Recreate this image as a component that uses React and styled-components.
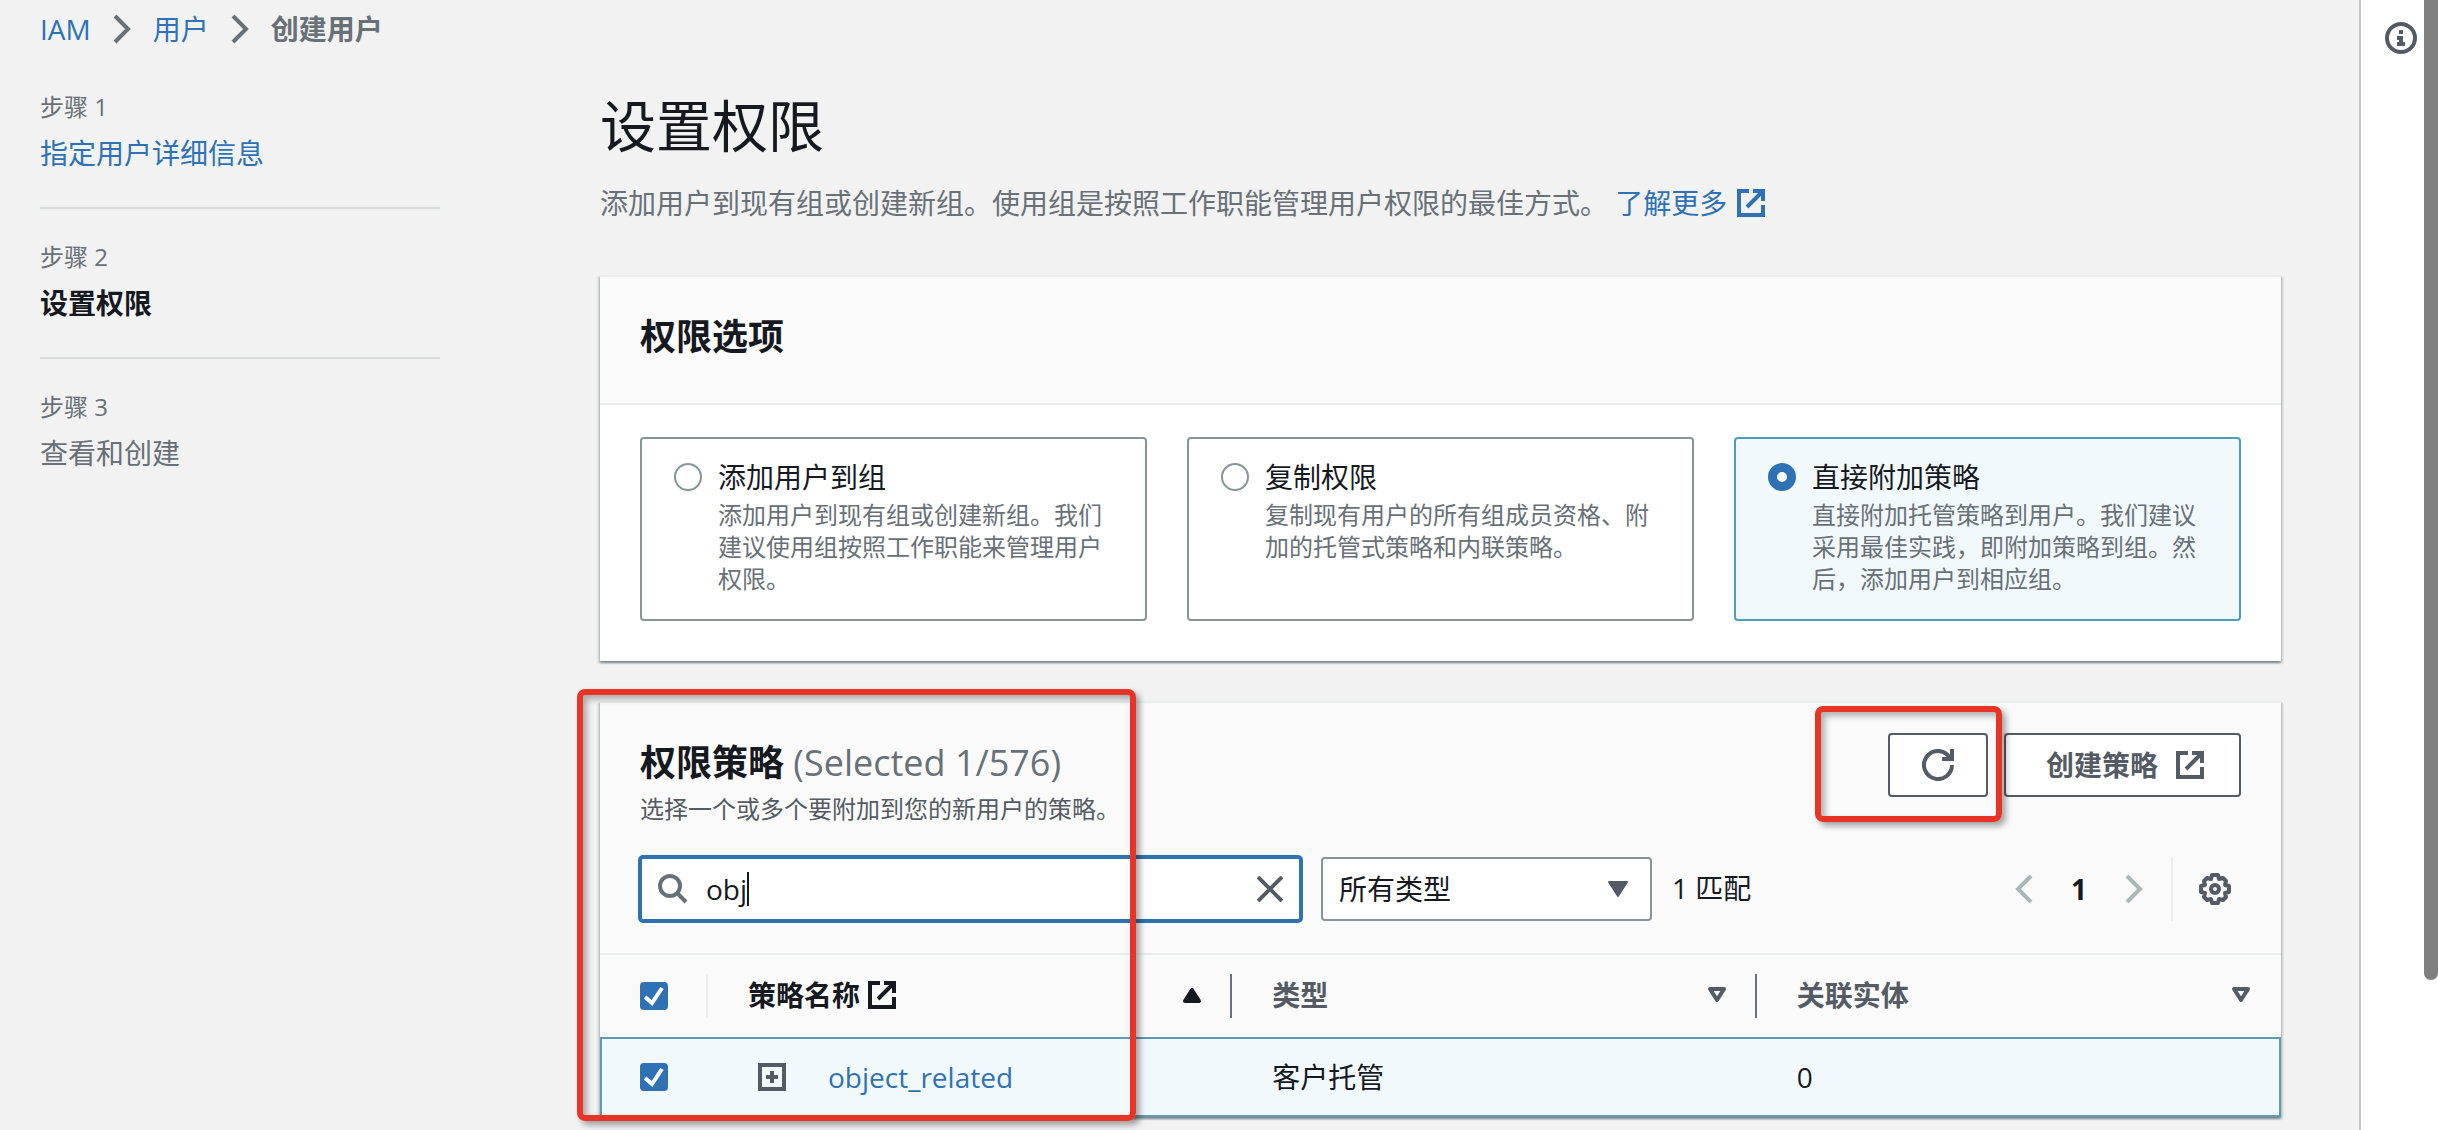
import React, { useState } from 'react'
import styled, { createGlobalStyle } from 'styled-components';

const GlobalStyle = createGlobalStyle`
* { box-sizing: border-box; }
body {
    margin: 0;
    background: #f2f2f2;
    color: #16191f;
    font-family: "Open Sans", "Noto Sans CJK SC", sans-serif;
    font-size: 28px;
    line-height: 44px;
}
a { color: #2e72b5; text-decoration: none; }
button, input, select { font: inherit; color: inherit; }
`;

const options = [
    { id: 'group', title: '添加用户到组', text: '添加用户到现有组或创建新组。我们建议使用组按照工作职能来管理用户权限。' },
    { id: 'copy', title: '复制权限', text: '复制现有用户的所有组成员资格、附加的托管式策略和内联策略。' },
    { id: 'attach', title: '直接附加策略', text: '直接附加托管策略到用户。我们建议采用最佳实践，即附加策略到组。然后，添加用户到相应组。' },
];

const ExternalIcon = () => (
    <Icon $size={28} viewBox="0 0 28 28" strokeWidth="4">
        <path d="M12 2H2v24h24V16M10 18L25 3M16 2h10v10" />
    </Icon>
)

const Chevron = ({ left }) => (
    <Icon $w={18} $size={30} viewBox="0 0 18 30" strokeWidth="4">
        <path d={left ? "M16 2L3 15l13 13" : "M2 2l13 13L2 28"} />
    </Icon>
)

const SortIcon = ({ up }) => (
    <Icon $w={20} $size={16} viewBox="0 0 20 16" strokeWidth="4" strokeLinejoin="round">
        {up ? <path d="M10 3l7 11H3z" fill="currentColor" /> : <path d="M3 2h14l-7 11z" />}
    </Icon>
)

const App = () => {
    const [selected, setSelected] = useState('attach');
    const [query, setQuery] = useState('obj');
    const [checked, setChecked] = useState(true);

    return <Page>
        <GlobalStyle />
        <Content>
            <Breadcrumbs aria-label="Breadcrumbs">
                <a href="#iam">IAM</a>
                <Chevron />
                <a href="#users">用户</a>
                <Chevron />
                <strong>创建用户</strong>
            </Breadcrumbs>
            <Columns>
                <Steps>
                    <Step>
                        <StepLabel>步骤 1</StepLabel>
                        <a href="#details">指定用户详细信息</a>
                    </Step>
                    <Step>
                        <StepLabel>步骤 2</StepLabel>
                        <StepName $active>设置权限</StepName>
                    </Step>
                    <Step>
                        <StepLabel>步骤 3</StepLabel>
                        <StepName>查看和创建</StepName>
                    </Step>
                </Steps>
                <main>
                    <Title>设置权限</Title>
                    <Intro>
                        添加用户到现有组或创建新组。使用组是按照工作职能管理用户权限的最佳方式。{' '}
                        <IconLink href="#more">了解更多<ExternalIcon /></IconLink>
                    </Intro>

                    <Panel>
                        <PanelHeader><PanelTitle>权限选项</PanelTitle></PanelHeader>
                        <Tiles>
                            {options.map(o => (
                                <Tile key={o.id} $active={selected === o.id}>
                                    <Radio type="radio" name="option" checked={selected === o.id} onChange={() => setSelected(o.id)} />
                                    <span>
                                        {o.title}
                                        <TileText>{o.text}</TileText>
                                    </span>
                                </Tile>
                            ))}
                        </Tiles>
                    </Panel>

                    <Panel>
                        <Annotation $area="table" />
                        <TableTop>
                            <div>
                                <PanelTitle>权限策略 <Count>(Selected 1/576)</Count></PanelTitle>
                                <SubTitle>选择一个或多个要附加到您的新用户的策略。</SubTitle>
                            </div>
                            <Actions>
                                <Annotation $area="refresh" />
                                <Button $square aria-label="刷新">
                                    <Icon $size={32} viewBox="0 0 32 32" strokeWidth="4">
                                        <path d="M30 16a14 14 0 1 1-5-10.700L29 10M30 0v10H20" />
                                    </Icon>
                                </Button>
                                <Button>创建策略<ExternalIcon /></Button>
                            </Actions>
                        </TableTop>
                        <Filters>
                            <Search>
                                <Icon $size={30} viewBox="0 0 30 30" strokeWidth="4">
                                    <circle cx="12" cy="12" r="10" />
                                    <path d="M19 19l9 9" />
                                </Icon>
                                <input aria-label="搜索" autoFocus value={query} onChange={e => setQuery(e.target.value)} />
                                <Caret />
                                <IconButton aria-label="清除" onClick={() => setQuery('')}>
                                    <Icon $size={26} viewBox="0 0 26 26" strokeWidth="4"><path d="M1 1l24 24M25 1L1 25" /></Icon>
                                </IconButton>
                            </Search>
                            <SelectBox>
                                <select aria-label="类型"><option>所有类型</option></select>
                                <Icon $w={20} $size={16} viewBox="0 0 20 16" strokeWidth="2" strokeLinejoin="round">
                                    <path d="M1 1h18l-9 14z" fill="currentColor" />
                                </Icon>
                            </SelectBox>
                            <Matches>1 匹配</Matches>
                            <Pagination>
                                <IconButton $muted aria-label="上一页"><Chevron left /></IconButton>
                                <strong>1</strong>
                                <IconButton $muted aria-label="下一页"><Chevron /></IconButton>
                            </Pagination>
                            <Preferences>
                                <IconButton aria-label="首选项">
                                    <Icon $size={32} viewBox="0 0 32 32" strokeWidth="4" strokeLinejoin="round">
                                        <path d="M13 2h6l1 4 4-1 3 3-1 4 4 1v6l-4 1 1 4-3 3-4-1-1 4h-6l-1-4-4 1-3-3 1-4-4-1v-6l4-1-1-4 3-3 4 1z" />
                                        <circle cx="16" cy="16" r="4" />
                                    </Icon>
                                </IconButton>
                            </Preferences>
                        </Filters>
                        <Table>
                            <colgroup><col width="108" /><col /><col /><col /></colgroup>
                            <thead>
                                <tr>
                                    <Th $pale><Check type="checkbox" aria-label="全选" checked={checked} onChange={() => setChecked(!checked)} /></Th>
                                    <Th $sorted><HeadCell><IconText>策略名称<ExternalIcon /></IconText><SortIcon up /></HeadCell></Th>
                                    <Th><HeadCell>类型<SortIcon /></HeadCell></Th>
                                    <Th><HeadCell>关联实体<SortIcon /></HeadCell></Th>
                                </tr>
                            </thead>
                            <tbody>
                                <tr>
                                    <Td><Check type="checkbox" aria-label="object_related" checked={checked} onChange={() => setChecked(!checked)} /></Td>
                                    <Td>
                                        <NameCell>
                                            <IconButton aria-label="展开">
                                                <Icon $size={28} viewBox="0 0 28 28" strokeWidth="4">
                                                    <path d="M2 2h24v24H2zM14 8v12M8 14h12" />
                                                </Icon>
                                            </IconButton>
                                            <a href="#object_related">object_related</a>
                                        </NameCell>
                                    </Td>
                                    <Td>客户托管</Td>
                                    <Td>0</Td>
                                </tr>
                            </tbody>
                        </Table>
                    </Panel>
                </main>
            </Columns>
        </Content>
        <Rail>
            <IconButton aria-label="信息">
                <Icon $size={32} viewBox="0 0 32 32" strokeWidth="4">
                    <circle cx="16" cy="16" r="14" />
                    <path d="M14 8h4v4h-4zM12 14h6v6h2v4h-8v-4h2v-2h-2z" fill="currentColor" stroke="none" />
                </Icon>
            </IconButton>
        </Rail>
        <ScrollTrack><ScrollThumb /></ScrollTrack>
    </Page>
}

export default App

const Page = styled.div`
display: grid;
grid-template-columns: minmax(0, 1fr) 65px 14px;
min-height: 100vh;
`;
const Content = styled.div`
padding: 7px 78px 12px 40px;
`;
const Icon = styled.svg.attrs({ fill: 'none', stroke: 'currentColor' })`
flex: none;
display: block;
width: ${props => props.$w || props.$size}px;
height: ${props => props.$size}px;
`;
const Breadcrumbs = styled.nav`
display: flex;
align-items: center;
gap: 22px;
color: #687078;
`;
const Columns = styled.div`
display: grid;
grid-template-columns: 400px minmax(0, 1fr);
column-gap: 160px;
padding-top: 40px;
`;
const Steps = styled.ol`
list-style: none;
margin: 0;
padding: 0;
`;
const Step = styled.li`
padding-bottom: 32px;
& + & {
    border-top: 2px solid #d5dbdb;
    padding-top: 32px;
}
`;
const StepLabel = styled.div`
margin-bottom: 8px;
font-size: 24px;
line-height: 32px;
color: #687078;
`;
const StepName = styled.div`
color: ${props => props.$active ? "#16191f" : "#687078"};
font-weight: ${props => props.$active ? 700 : 400};
`;
const Title = styled.h1`
margin: 0 0 22px;
font-size: 56px;
font-weight: 400;
line-height: 68px;
`;
const Intro = styled.p`
margin: 0 0 50px;
color: #687078;
`;
const IconLink = styled.a`
display: inline-flex;
align-items: center;
gap: 10px;
vertical-align: top;
`;
const Panel = styled.section`
position: relative;
margin-bottom: 40px;
border-top: 2px solid #eaeded;
background: #fff;
box-shadow: 0 2px 2px rgba(0, 28, 36, .3), 2px 2px 2px rgba(0, 28, 36, .15), -2px 2px 2px rgba(0, 28, 36, .15);
&:last-child { margin-bottom: 0; }
`;
const PanelHeader = styled.header`
padding: 38px 40px 44px;
background: #fafafa;
border-bottom: 2px solid #eaeded;
`;
const PanelTitle = styled.h2`
margin: 0;
font-size: 36px;
line-height: 44px;
`;
const Tiles = styled.div`
display: grid;
grid-template-columns: repeat(3, 1fr);
gap: 40px;
padding: 32px 40px 40px;
`;
const Tile = styled.label`
display: flex;
align-items: flex-start;
gap: 16px;
padding: 16px 32px 24px;
border: 2px solid ${props => props.$active ? "#4b9dba" : "#879596"};
border-radius: 4px;
background: ${props => props.$active ? "#f2f9fd" : "#fff"};
`;
const TileText = styled.span`
display: block;
font-size: 24px;
line-height: 32px;
color: #687078;
`;
const Radio = styled.input`
appearance: none;
flex: none;
width: 28px;
height: 28px;
margin: 8px 0 0;
border: 2px solid #879596;
border-radius: 50%;
background: #fff;
&:checked {
    border: 9px solid #2e72b5;
}
`;
const TableTop = styled.header`
display: flex;
justify-content: space-between;
padding: 30px 40px 32px;
background: #fafafa;
> div:first-child { padding-top: 8px; }
`;
const Count = styled.span`
font-weight: 400;
color: #687078;
`;
const SubTitle = styled.p`
margin: 8px 0 0;
font-size: 24px;
line-height: 32px;
color: #545b64;
`;
const Actions = styled.div`
position: relative;
display: flex;
align-items: flex-start;
gap: 16px;
`;
const Button = styled.button`
display: flex;
align-items: center;
gap: 18px;
height: 64px;
padding: ${props => props.$square ? "0 32px" : "0 35px 0 40px"};
border: 2px solid #545b64;
border-radius: 4px;
background: #fff;
color: #545b64;
font-weight: 700;
`;
const IconButton = styled.button`
display: flex;
padding: 0;
border: 0;
background: none;
color: ${props => props.$muted ? "#aab7b8" : "#545b64"};
`;
const Filters = styled.div`
display: flex;
align-items: center;
padding: 0 40px 32px;
background: #fafafa;
border-bottom: 2px solid #eaeded;
`;
const Search = styled.div`
display: flex;
flex: 0 1 665px;
align-items: center;
height: 68px;
margin: -2px 18px -2px -2px;
padding: 0 16px;
border: 4px solid #2e72b0;
border-radius: 5px;
background: #fff;
color: #687078;
input {
    field-sizing: content;
    min-width: 0;
    padding: 0 0 0 18px;
    border: 0;
    outline: 0;
    background: none;
    color: #16191f;
    caret-color: transparent;
}
button { margin-left: auto; }
`;
const Caret = styled.span`
width: 2px;
height: 34px;
background: #16191f;
`;
const SelectBox = styled.div`
position: relative;
flex: 0 1 331px;
margin-right: 20px;
color: #545b64;
select {
    appearance: none;
    display: block;
    width: 100%;
    height: 64px;
    padding: 0 16px;
    border: 2px solid #879596;
    border-radius: 4px;
    background: #fff;
    color: #16191f;
}
svg {
    position: absolute;
    top: 24px;
    right: 24px;
    pointer-events: none;
}
`;
const Matches = styled.span`
padding-bottom: 2px;
`;
const Pagination = styled.div`
display: flex;
align-items: center;
gap: 38px;
margin-left: auto;
padding-right: 28px;
`;
const Preferences = styled.div`
display: flex;
align-items: center;
height: 64px;
padding: 0 10px 0 26px;
border-left: 2px solid #eaeded;
`;
const Table = styled.table`
width: 100%;
table-layout: fixed;
border-spacing: 0;
`;
const Th = styled.th`
height: 82px;
padding: 0 0 0 40px;
text-align: left;
background: linear-gradient(${props => props.$pale ? "#eaeded, #eaeded" : "#687078, #687078"}) right center / 2px 44px no-repeat #fafafa;
color: ${props => props.$sorted ? "#16191f" : "#545b64"};
&:last-child { background: #fafafa; }
`;
const HeadCell = styled.div`
display: flex;
align-items: center;
justify-content: space-between;
padding: 0 30px 2px 0;
`;
const IconText = styled.span`
display: flex;
align-items: center;
gap: 8px;
`;
const Td = styled.td`
height: 80px;
padding: 0 0 0 40px;
border: solid #5b9bb5;
border-width: 2px 0;
background: #f2f9fd;
&:first-child {
    border-left-width: 2px;
    padding-left: 38px;
}
&:last-child { border-right-width: 2px; }
`;
const NameCell = styled.div`
display: flex;
align-items: center;
gap: 42px;
padding-left: 10px;
`;
const Check = styled.input`
appearance: none;
display: block;
width: 28px;
height: 28px;
margin: 0;
border: 2px solid #879596;
border-radius: 4px;
background: #fff;
&:checked {
    border-color: #2e72b5;
    background: #2e72b5 url("data:image/svg+xml,%3Csvg xmlns='http://www.w3.org/2000/svg' viewBox='0 0 24 24'%3E%3Cpath d='M3 13l7 6L20 4' fill='none' stroke='white' stroke-width='4'/%3E%3C/svg%3E") center / 24px 24px no-repeat;
}
`;
// red marker frames drawn over the table and the refresh button
const Annotation = styled.div`
position: absolute;
z-index: 1;
pointer-events: none;
border: 6px solid #e83426;
border-radius: 8px;
box-shadow: 4px 4px 6px rgba(0, 0, 0, .35), inset 4px 4px 6px rgba(0, 0, 0, .3);
${props => props.$area === 'table'
    ? "top: -14px; bottom: -4px; left: -23px; width: 559px;"
    : "top: -27px; left: -73px; width: 187px; height: 116px;"}
`;
const Rail = styled.aside`
display: flex;
justify-content: center;
align-items: flex-start;
padding: 22px 0 0 16px;
border-left: 2px solid #c4c8c9;
background: #fff;
`;
const ScrollTrack = styled.div`
background: #fff;
`;
const ScrollThumb = styled.div`
height: 980px;
border-radius: 0 0 7px 7px;
background: #808080;
`;
